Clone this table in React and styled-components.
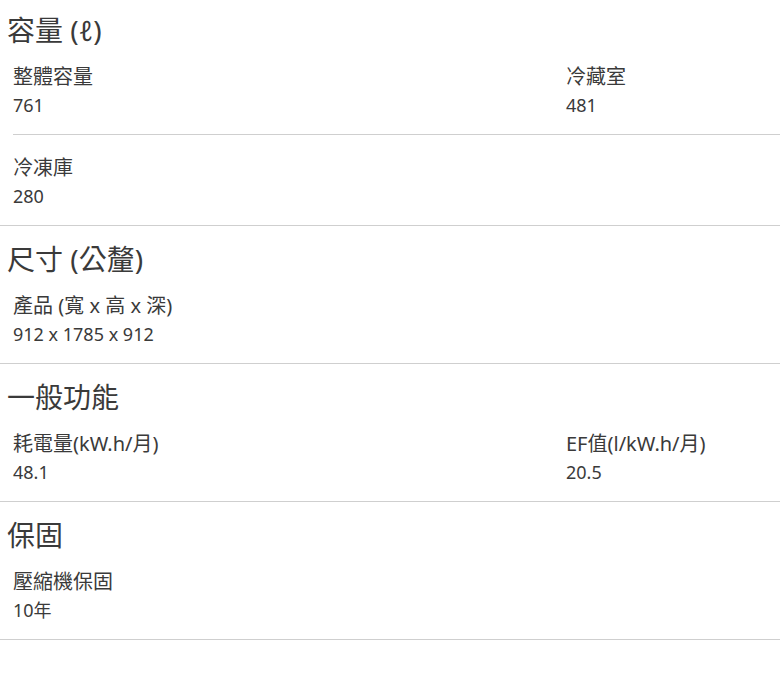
import styled, { createGlobalStyle } from 'styled-components'

const specs = [
  {
    title: '容量 (ℓ)',
    rows: [
      [{ label: '整體容量', value: '761' }, { label: '冷藏室', value: '481' }],
      [{ label: '冷凍庫', value: '280' }],
    ],
  },
  {
    title: '尺寸 (公釐)',
    rows: [[{ label: '產品 (寬 x 高 x 深)', value: '912 x 1785 x 912' }]],
  },
  {
    title: '一般功能',
    rows: [
      [
        { label: '耗電量(kW.h/月)', value: '48.1' },
        { label: 'EF值(l/kW.h/月)', value: '20.5' },
      ],
    ],
  },
  {
    title: '保固',
    rows: [[{ label: '壓縮機保固', value: '10年' }]],
  },
]

const App = () => {
  return (
    <>
      <GlobalStyle />
      <Page>
        {specs.map((section, i) => (
          <Section key={section.title}>
            <Title $first={i === 0}>{section.title}</Title>
            {section.rows.map((row, j) => (
              <Row key={j}>
                {row.map((item) => (
                  <Item key={item.label}>
                    <Label>{item.label}</Label>
                    <Value>{item.value}</Value>
                  </Item>
                ))}
              </Row>
            ))}
          </Section>
        ))}
      </Page>
    </>
  )
}

const GlobalStyle = createGlobalStyle`
body{
  margin: 0;
  background: #fff;
  font-family: "Noto Sans", "Noto Sans CJK TC", sans-serif;
  color: #3a3a3a;
}
`;

const Page = styled.div`
width: 780px;
`;

const Section = styled.section`
border-bottom: 1px solid #cfcfcf;
`;

const Title = styled.h2`
margin: 0 0 2px;
padding: ${(p) => (p.$first ? '18px' : '21px')} 0 0 7px;
font-size: 28px;
font-weight: 400;
line-height: 24px;
color: #3a3a3a;
`;

const Row = styled.div`
display: grid;
grid-template-columns: 553px 1fr;
margin-left: 13px;
padding: 18px 0 14px;
border-bottom: 1px solid #cfcfcf;
&:last-child{
  border-bottom: none;
}
`;

const Item = styled.div`
display: flex;
flex-direction: column;
`;

const Label = styled.span`
font-size: 20px;
line-height: 30px;
`;

const Value = styled.span`
margin-top: -2px;
font-size: 18px;
line-height: 30px;
`;

export default App;
